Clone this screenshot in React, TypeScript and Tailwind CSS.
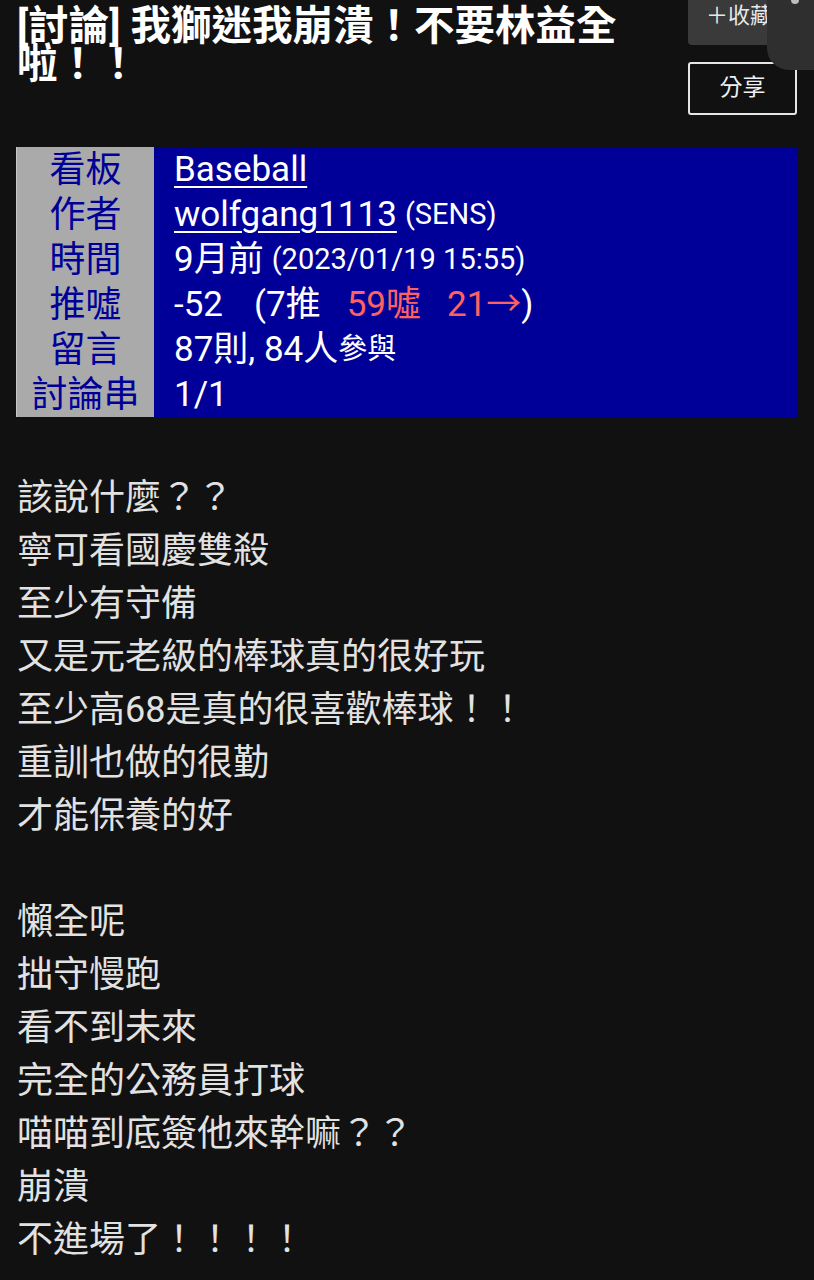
import React from "react";

const FONT = { fontFamily: 'Roboto, "Noto Sans CJK TC", "Noto Sans", sans-serif' };

const rows: { label: string; content: React.ReactNode }[] = [
  {
    label: "看板",
    content: <span className="underline decoration-2 underline-offset-[5px]">Baseball</span>,
  },
  {
    label: "作者",
    content: (
      <>
        <span className="underline decoration-2 underline-offset-[5px]">wolfgang1113</span>
        <span className="ml-[8px] text-[29px]">(SENS)</span>
      </>
    ),
  },
  {
    label: "時間",
    content: (
      <>
        <span>9月前</span>
        <span className="ml-[8px] text-[29px]">(2023/01/19 15:55)</span>
      </>
    ),
  },
  {
    label: "推噓",
    content: (
      <>
        <span>-52</span>
        <span className="ml-[31px]">(7推</span>
        <span className="ml-[26px] text-[#ff6161]">59噓</span>
        <span className="ml-[26px] text-[#ff6161]">21→</span>
        <span>)</span>
      </>
    ),
  },
  {
    label: "留言",
    content: (
      <>
        <span>87則, 84人</span>
        <span className="text-[29px]">參與</span>
      </>
    ),
  },
  { label: "討論串", content: <span>1/1</span> },
];

const body = [
  "該說什麼？？",
  "寧可看國慶雙殺",
  "至少有守備",
  "又是元老級的棒球真的很好玩",
  "至少高68是真的很喜歡棒球！！",
  "重訓也做的很勤",
  "才能保養的好",
  "",
  "懶全呢",
  "拙守慢跑",
  "看不到未來",
  "完全的公務員打球",
  "喵喵到底簽他來幹嘛？？",
  "崩潰",
  "不進場了！！！！",
];

export default function App() {
  return (
    <div className="relative min-h-[1280px] w-full overflow-hidden bg-[#111111] text-white" style={FONT}>
      {/* floating overlay top-right */}
      <div className="absolute right-[-20px] top-[-30px] h-[100px] w-[67px] rounded-bl-[22px] rounded-tl-[22px] bg-[#2f2f2f]" />
      <div className="absolute right-[15px] top-[-4px] h-[8px] w-[8px] rounded-full bg-[#bdbdbd]" />

      <div className="flex items-start pl-[17px] pr-[17px]">
        <h1 className="w-[650px] pt-[7px] text-[40.5px] font-bold leading-[38px] text-white">
          [討論] 我獅迷我崩潰！不要林益全啦！！
        </h1>
        <div className="ml-auto flex w-[109px] flex-col gap-[17px]">
          <div className="flex h-[45px] w-[112px] items-start rounded-b-[4px] bg-[#3a3a3a] pl-[18px] pt-[1px] text-[22px] leading-[30px] text-[#e8e8e8]">
            ＋收藏
          </div>
          <div className="flex h-[53px] w-[109px] items-center justify-center rounded-[3px] border-2 border-[#e6e6e6] text-[23px] text-[#f0f0f0]">
            分享
          </div>
        </div>
      </div>

      <div className="ml-[16px] mr-[17px] mt-[32px] grid grid-cols-[137px_1fr] border-l border-[#c8c8c8]">
        {rows.map((r, i) => (
          <React.Fragment key={i}>
            <div className="flex h-[45px] items-center justify-center bg-[#aaaaaa] text-[36px] leading-none text-[#000099]">
              {r.label}
            </div>
            <div className="flex h-[45px] items-center whitespace-nowrap bg-[#000099] pl-[20px] text-[35px] leading-none text-white">
              {r.content}
            </div>
          </React.Fragment>
        ))}
      </div>

      <div className="mt-[55px] pl-[17px] text-[36px] leading-[53px] text-[#e2e2e2]">
        {body.map((l, i) => (
          <div key={i} className="h-[53px]">
            {l}
          </div>
        ))}
      </div>
    </div>
  );
}
